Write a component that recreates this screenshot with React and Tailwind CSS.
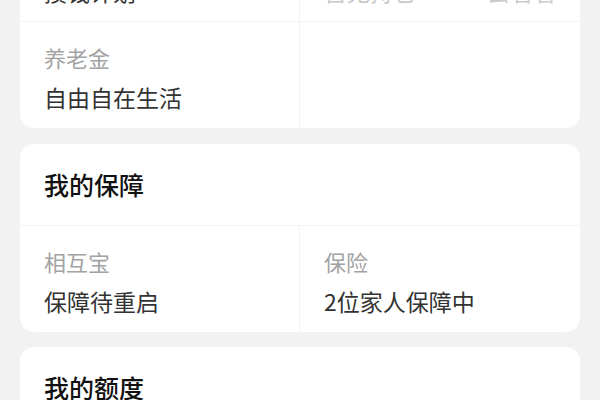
import React from 'react';

const font = { fontFamily: '"Noto Sans CJK SC", "Noto Sans", sans-serif' };

// one cell of a two-column info row
function Cell({ label, value, right, muted, divider }) {
  return (
    <div className={`px-6 pt-[20px] ${divider ? 'border-r border-[#f3f3f3]' : ''}`}>
      <div className="text-[22px] leading-[30px] text-[#a3a3a3]">{label}</div>
      <div
        className={`mt-[10px] flex items-center justify-between text-[23px] leading-[30px] ${
          muted ? 'text-[#c8c8c8]' : 'text-[#333333]'
        }`}
      >
        <span>{value}</span>
        {right && <span className="text-[#cccccc]">{right}</span>}
      </div>
    </div>
  );
}

function Row({ left, right, last }) {
  return (
    <div className={`grid grid-cols-2 h-[106px] ${last ? '' : 'border-b border-[#f3f3f3]'}`}>
      <Cell {...left} divider />
      <Cell {...(right || {})} />
    </div>
  );
}

function Header({ title }) {
  return (
    <div className="h-[82px] flex items-center px-6 border-b border-[#f3f3f3]">
      <h2 className="text-[25px] font-medium text-[#111111]">{title}</h2>
    </div>
  );
}

export default function App() {
  return (
    <div className="h-[400px] overflow-hidden bg-[#f2f2f2] px-5" style={font}>
      {/* card scrolled partly out of view */}
      <div className="-mt-[84px] bg-white rounded-[14px] overflow-hidden">
        <Row
          left={{ label: '理财', value: '攒钱计划' }}
          right={{ label: '基金', value: '暂无持仓', right: '去看看', muted: true }}
        />
        <Row left={{ label: '养老金', value: '自由自在生活' }} last />
      </div>

      <div className="mt-4 bg-white rounded-[14px] overflow-hidden">
        <Header title="我的保障" />
        <Row
          left={{ label: '相互宝', value: '保障待重启' }}
          right={{ label: '保险', value: '2位家人保障中' }}
          last
        />
      </div>

      <div className="mt-[15px] bg-white rounded-[14px] overflow-hidden">
        <Header title="我的额度" />
        <Row
          left={{ label: '花呗', value: '可用额度' }}
          right={{ label: '借呗', value: '查看额度' }}
          last
        />
      </div>
    </div>
  );
}
